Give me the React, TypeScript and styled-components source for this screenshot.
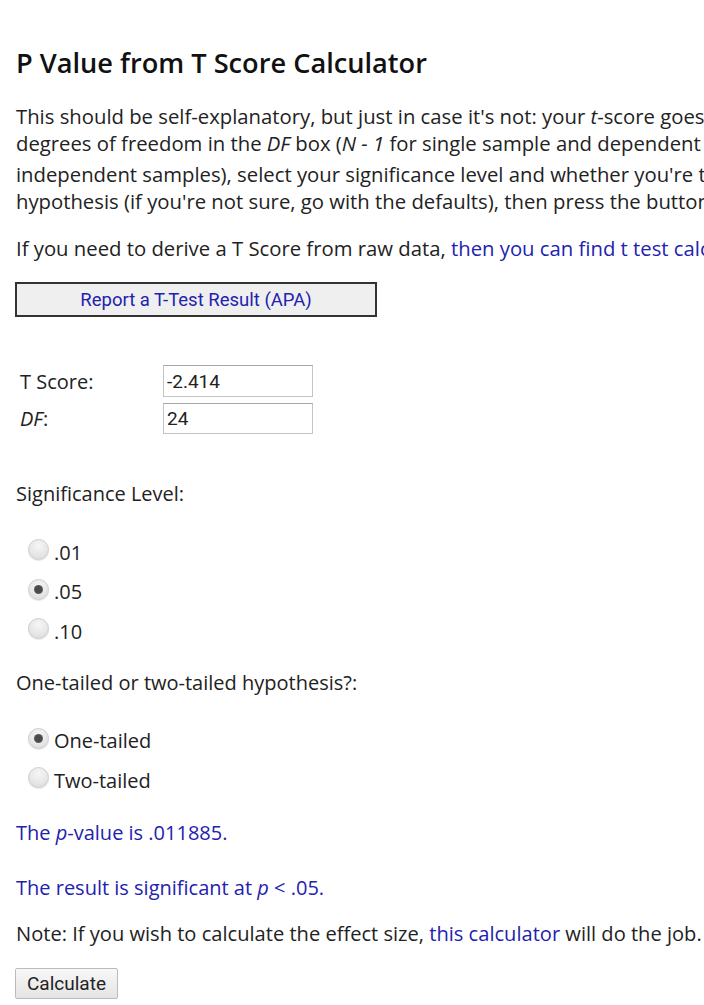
import React, { useState } from "react";
import styled, { createGlobalStyle } from "styled-components";

const GlobalStyle = createGlobalStyle`
  html, body {
    margin: 0;
    padding: 0;
    background: #fff;
    overflow-x: hidden;
  }
  body {
    font-family: "Open Sans", "DejaVu Sans", sans-serif;
    color: #222;
  }
`;

const Page = styled.div`
  width: 1100px;
  padding: 45px 0 6px 16px;
  box-sizing: border-box;
`;

const Title = styled.h1`
  margin: 0 0 22px;
  font-size: 27.2px;
  font-weight: 600;
  line-height: 36px;
  color: #111;
`;

const Para = styled.p`
  margin: 0 0 20px;
  font-size: 20.3px;
  line-height: 27px;
  white-space: nowrap;
  sub {
    display: inline-block;
    font-size: 14px;
    line-height: 14px;
    vertical-align: -8px;
  }
`;

const Link = styled.a`
  color: #2222b0;
  text-decoration: none;
`;

const ReportButton = styled.button`
  display: block;
  width: 362px;
  height: 35px;
  margin: 20px 0 48px -1px;
  background: #efefef;
  border: 2px solid #333;
  color: #2222b0;
  font-family: Roboto, sans-serif;
  font-size: 18.5px;
  cursor: pointer;
`;

const FieldTable = styled.div`
  display: grid;
  grid-template-columns: 143px 150px;
  grid-template-rows: 32px 31px;
  row-gap: 6px;
  margin-left: 4px;
  margin-bottom: 46px;
`;

const FieldLabel = styled.label`
  display: flex;
  align-items: center;
  font-size: 20px;
`;

const NumInput = styled.input`
  width: 150px;
  height: 100%;
  box-sizing: border-box;
  border: 1px solid #c4c4c4;
  border-top-color: #a8a8a8;
  padding: 0 3px;
  font-family: Roboto, sans-serif;
  font-size: 19px;
  color: #222;
  outline: none;
`;

const GroupLabel = styled.div<{ $gap: number }>`
  font-size: 20px;
  line-height: 28px;
  margin-bottom: ${(p) => p.$gap}px;
`;

const RadioList = styled.div<{ $gap: number }>`
  display: flex;
  flex-direction: column;
  gap: 10.5px;
  padding-left: 12px;
  margin-bottom: ${(p) => p.$gap}px;
`;

const RadioRow = styled.label`
  display: flex;
  align-items: center;
  font-size: 20px;
  line-height: 29px;
  cursor: pointer;
`;

const Radio = styled.input`
  appearance: none;
  width: 21px;
  height: 21px;
  margin: 0 5px 5px 0;
  border-radius: 50%;
  border: 1px solid #cdcdcd;
  background: radial-gradient(circle at 50% 30%, #f6f6f6 0%, #e6e6e6 60%, #d6d6d6 100%);
  box-shadow: 0 1px 1px rgba(0, 0, 0, 0.1);
  position: relative;
  flex: none;
  &:checked::after {
    content: "";
    position: absolute;
    left: 5px;
    top: 5px;
    width: 9px;
    height: 9px;
    border-radius: 50%;
    background: radial-gradient(circle, #4a4a4a 45%, #707070 100%);
  }
`;

const Result = styled.p<{ $gap: number }>`
  margin: 0 0 ${(p) => p.$gap}px;
  font-size: 20px;
  line-height: 29px;
  color: #2222b0;
`;

const Note = styled.p`
  margin: 0 0 20px;
  font-size: 20.1px;
  line-height: 29px;
  white-space: nowrap;
`;

const CalcButton = styled.button`
  display: block;
  height: 31px;
  padding: 0 11px;
  margin-left: -1px;
  background: linear-gradient(#f8f8f8, #e4e4e4);
  border: 1px solid #bbb;
  border-radius: 2px;
  font-family: Roboto, sans-serif;
  font-size: 19px;
  color: #222;
`;

const levels = [".01", ".05", ".10"];
const tails = ["One-tailed", "Two-tailed"];

export default function App() {
  const [level, setLevel] = useState(".05");
  const [tail, setTail] = useState("One-tailed");

  return (
    <Page>
      <GlobalStyle />
      <Title>P Value from T Score Calculator</Title>
      <Para>
        This should be self-explanatory, but just in case it's not: your <i>t</i>-score goes
        into the <i>T Score</i> box, you stick your
        <br />
        degrees of freedom in the <i>DF</i> box (<i>N - 1</i> for single sample and dependent
        pairs, (<i>N</i>
        <sub>1</sub> - 1) + (<i>N</i>
        <sub>2</sub> - 1) for
        <br />
        independent samples), select your significance level and whether you're testing a one or
        two-tailed
        <br />
        hypothesis (if you're not sure, go with the defaults), then press the button.
      </Para>
      <Para>
        If you need to derive a T Score from raw data,{" "}
        <Link href="#">then you can find t test calculators here.</Link>
      </Para>
      <ReportButton>Report a T-Test Result (APA)</ReportButton>
      <FieldTable>
        <FieldLabel>T Score:</FieldLabel>
        <NumInput defaultValue="-2.414" />
        <FieldLabel>
          <i>DF</i>:
        </FieldLabel>
        <NumInput defaultValue="24" />
      </FieldTable>
      <GroupLabel $gap={29.5}>Significance Level:</GroupLabel>
      <RadioList $gap={23}>
        {levels.map((l) => (
          <RadioRow key={l}>
            <Radio type="radio" name="sig" checked={level === l} onChange={() => setLevel(l)} />
            {l}
          </RadioRow>
        ))}
      </RadioList>
      <GroupLabel $gap={29.5}>One-tailed or two-tailed hypothesis?:</GroupLabel>
      <RadioList $gap={23}>
        {tails.map((t) => (
          <RadioRow key={t}>
            <Radio type="radio" name="tail" checked={tail === t} onChange={() => setTail(t)} />
            {t}
          </RadioRow>
        ))}
      </RadioList>
      <Result $gap={26}>
        The <i>p</i>-value is .011885.
      </Result>
      <Result $gap={17}>
        The result is significant at <i>p</i> &lt; .05.
      </Result>
      <Note>
        Note: If you wish to calculate the effect size, <Link href="#">this calculator</Link> will
        do the job.
      </Note>
      <CalcButton>Calculate</CalcButton>
    </Page>
  );
}
